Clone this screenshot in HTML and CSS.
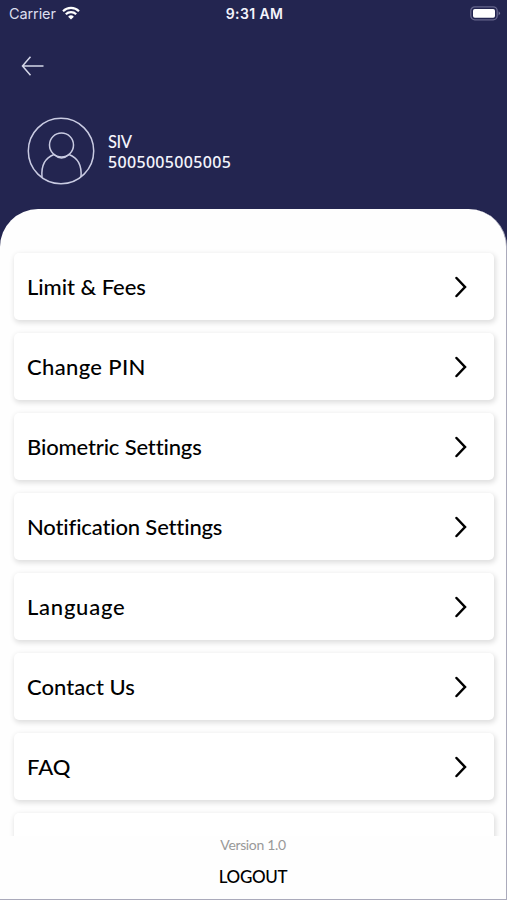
FILE: index.html
```html
<!DOCTYPE html>
<html lang="en">
<head>
    <meta charset="UTF-8">
    <title>Settings</title>
    <link rel="stylesheet" href="styles.css">
</head>
<body>
<div class="phone">
    <header class="header">
        <div class="status">
            <div class="carrier">
                <span>Carrier</span>
                <svg class="wifi" viewBox="0 0 18 14">
                    <path d="M1 5.2a11.5 11.5 0 0 1 16 0M3.8 8.2a7.4 7.4 0 0 1 10.4 0" fill="none" stroke="#fff" stroke-width="2.2"/>
                    <path d="M9 13.6l-2.9-2.9a4.1 4.1 0 0 1 5.8 0z" fill="#fff"/>
                </svg>
            </div>
            <span class="time">9:31 AM</span>
            <svg class="battery" viewBox="0 0 31 15">
                <rect x=".8" y=".8" width="26.4" height="13" rx="4" fill="none" stroke="#66668c" stroke-width="1.3"/>
                <rect x="3" y="3" width="22" height="8.7" rx="1.8" fill="#fff"/>
                <path d="M28.6 5.2q2.8 2.1 0 4.2z" fill="#77779a"/>
            </svg>
        </div>
        <a class="back" href="#">
            <svg viewBox="0 0 24 22"><path d="M22.500 11H1.500M9.500 1.800L1.500 11l8 9.200" fill="none" stroke="#d5d7e8" stroke-width="1.5"/></svg>
        </a>
        <div class="user">
            <svg class="avatar" viewBox="0 0 68 68">
                <g fill="none" stroke="#c9cbe2" stroke-width="1.5">
                    <circle cx="34" cy="34" r="32.7"/>
                    <circle cx="34.500" cy="28" r="12"/>
                    <path d="M15 60C14 48 19 40.500 27 37.500Q34.500 44.500 42 37.500C50 40.500 55 48 54 60"/>
                </g>
            </svg>
            <div class="info">
                <p class="name">SIV</p>
                <p class="number">5005005005005</p>
            </div>
        </div>
    </header>
    <main class="sheet">
        <ul class="menu">
            <li><a href="#"><span class="limit">Limit &amp; Fees</span><svg viewBox="0 0 12 22"><path d="M1.500 2L10 11l-8.500 9"/></svg></a></li>
            <li><a href="#"><span class="pin">Change PIN</span><svg viewBox="0 0 12 22"><path d="M1.500 2L10 11l-8.500 9"/></svg></a></li>
            <li><a href="#"><span class="biometric">Biometric Settings</span><svg viewBox="0 0 12 22"><path d="M1.500 2L10 11l-8.500 9"/></svg></a></li>
            <li><a href="#"><span class="notification">Notification Settings</span><svg viewBox="0 0 12 22"><path d="M1.500 2L10 11l-8.500 9"/></svg></a></li>
            <li><a href="#"><span class="language">Language</span><svg viewBox="0 0 12 22"><path d="M1.500 2L10 11l-8.500 9"/></svg></a></li>
            <li><a href="#"><span class="contact">Contact Us</span><svg viewBox="0 0 12 22"><path d="M1.500 2L10 11l-8.500 9"/></svg></a></li>
            <li><a href="#"><span class="faq">FAQ</span><svg viewBox="0 0 12 22"><path d="M1.500 2L10 11l-8.500 9"/></svg></a></li>
            <li><a href="#"></a></li>
        </ul>
        <footer class="footer">
            <p class="version">Version 1.0</p>
            <a class="logout" href="#">LOGOUT</a>
        </footer>
    </main>
</div>
</body>
</html>
```

FILE: styles.css
```css
body,ul,li,p{margin:0;padding:0;}
body{font-family:Lato,"Liberation Sans",sans-serif;color:#000;overflow:hidden;}
ul{list-style-type:none;}
a{color:inherit;text-decoration:none;}
svg{display:block;}
*{box-sizing:border-box;}
.phone{height:900px;display:flex;flex-direction:column;background:#232550;}

.header{height:209px;color:#f4f4fc;}
.status{display:grid;grid-template-columns:1fr auto 1fr;align-items:center;height:28px;padding:0 6px 0 9px;font:14.5px/28px Inter,sans-serif;}
.carrier{display:flex;gap:6px;align-items:center;color:#dcdeee;}
.carrier span{letter-spacing:-.1px;}
.wifi{width:18px;height:14px;margin-top:-2px;}
.time{font-size:14px;font-weight:600;letter-spacing:.4px;margin-left:-1px;}
.battery{width:31px;height:15px;justify-self:end;margin-top:-1px;}
.back{display:block;width:24px;margin:27px 0 0 21px;}
.back svg{width:24px;height:22px;}
.user{display:flex;align-items:center;gap:13px;margin:40px 0 0 27px;}
.avatar{width:68px;height:68px;}
.info{font-size:16.500px;line-height:20px;font-weight:500;padding-top:2px;}
.name{letter-spacing:-.5px;}
.number{font-family:"Noto Sans",sans-serif;font-size:16px;letter-spacing:.32px;}

.sheet{flex:1;min-height:0;display:flex;flex-direction:column;background:#fefefe;border-right:1px solid #aaaabb;border-bottom:1px solid #aaaabb;border-radius:38px 38px 0 0;overflow:hidden;}
.menu{flex:1;min-height:0;overflow:hidden;display:flex;flex-direction:column;gap:13px;padding:44px 12px 0 14px;}
.menu li{flex:0 0 67px;background:#fff;border-radius:5px;box-shadow:1px 2px 5px 1px rgba(0,0,0,.12);}
.menu a{display:flex;align-items:center;justify-content:space-between;height:67px;padding:0 27px 0 13px;font-size:22px;font-weight:500;font-variant-ligatures:none;}
.menu svg{width:12px;height:22px;fill:none;stroke:#000;stroke-width:2.500;stroke-linecap:round;}
.menu .limit{letter-spacing:-.05px;}
.menu .pin{letter-spacing:.35px;}
.menu .biometric{letter-spacing:-.15px;}
.menu .notification{letter-spacing:-.15px;}
.menu .language{letter-spacing:.75px;}
.menu .contact{letter-spacing:.05px;}

.footer{height:63px;text-align:center;}
.version{font-size:14px;line-height:18px;letter-spacing:-.35px;color:#999;}
.logout{display:block;margin-top:12px;font-size:17px;line-height:22px;font-weight:500;letter-spacing:-.3px;}
```
